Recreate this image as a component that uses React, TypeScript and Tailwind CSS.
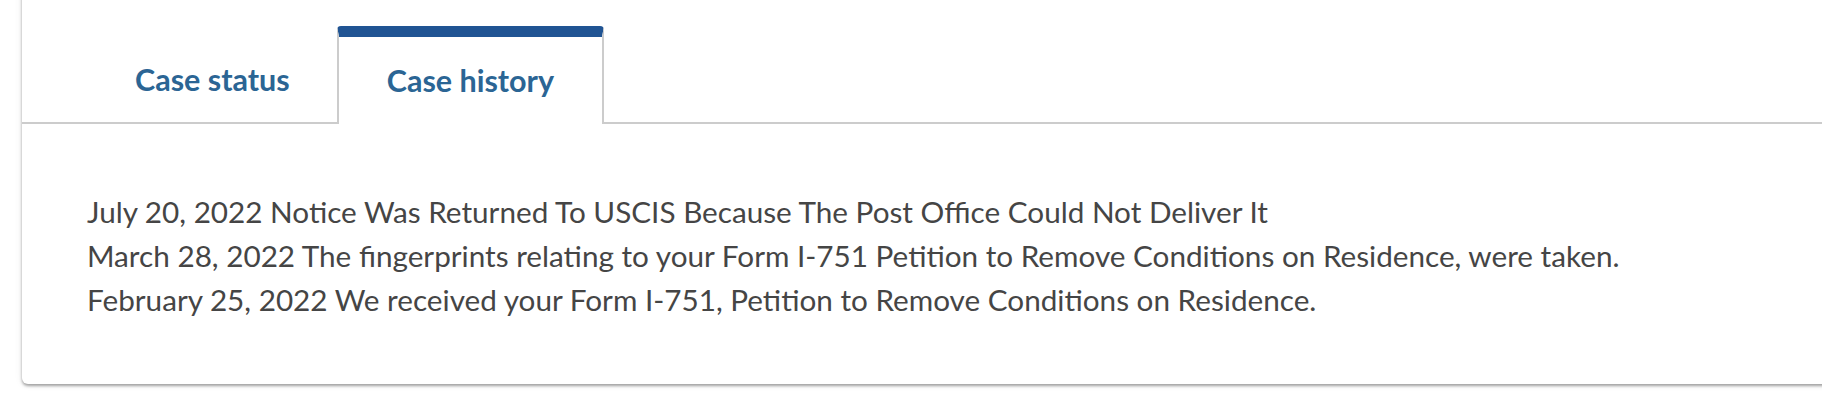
import React from "react";

export default function App() {
  const lines = [
    "July 20, 2022 Notice Was Returned To USCIS Because The Post Office Could Not Deliver It",
    "March 28, 2022 The fingerprints relating to your Form I-751 Petition to Remove Conditions on Residence, were taken.",
    "February 25, 2022 We received your Form I-751, Petition to Remove Conditions on Residence.",
  ];
  return (
    <div className="w-full h-[404px] overflow-hidden bg-white" style={{ fontFamily: "Lato, 'Open Sans', sans-serif" }}>
      <div className="ml-[22px] -mr-[40px] -mt-[10px] pt-[10px] bg-white rounded-b-[6px] shadow-[0_2px_3px_rgba(0,0,0,0.35),0_0_9px_rgba(0,0,0,0.08)]">
        <div className="flex items-end pl-[63px] pt-[26px] border-b-2 border-[#cccccc]">
          <div className="h-[96px] pl-[48px] pr-[45px] border-t-[11px] border-x-2 border-transparent flex items-center text-[30.5px] font-bold text-[#2b6594]">
            Case status
          </div>
          <div className="h-[98px] -mb-[2px] px-[48px] bg-white border-t-[11px] border-t-[#205493] border-x-2 border-x-[#cccccc] rounded-t-[4px] flex items-center text-[30.5px] font-bold text-[#2b6594]">
            Case history
          </div>
        </div>
        <div className="pl-[65px] pt-[66px] pb-[62px] text-[29.7px] leading-[44px] text-[#454545]">
          {lines.map((l) => (
            <p key={l}>{l}</p>
          ))}
        </div>
      </div>
    </div>
  );
}
